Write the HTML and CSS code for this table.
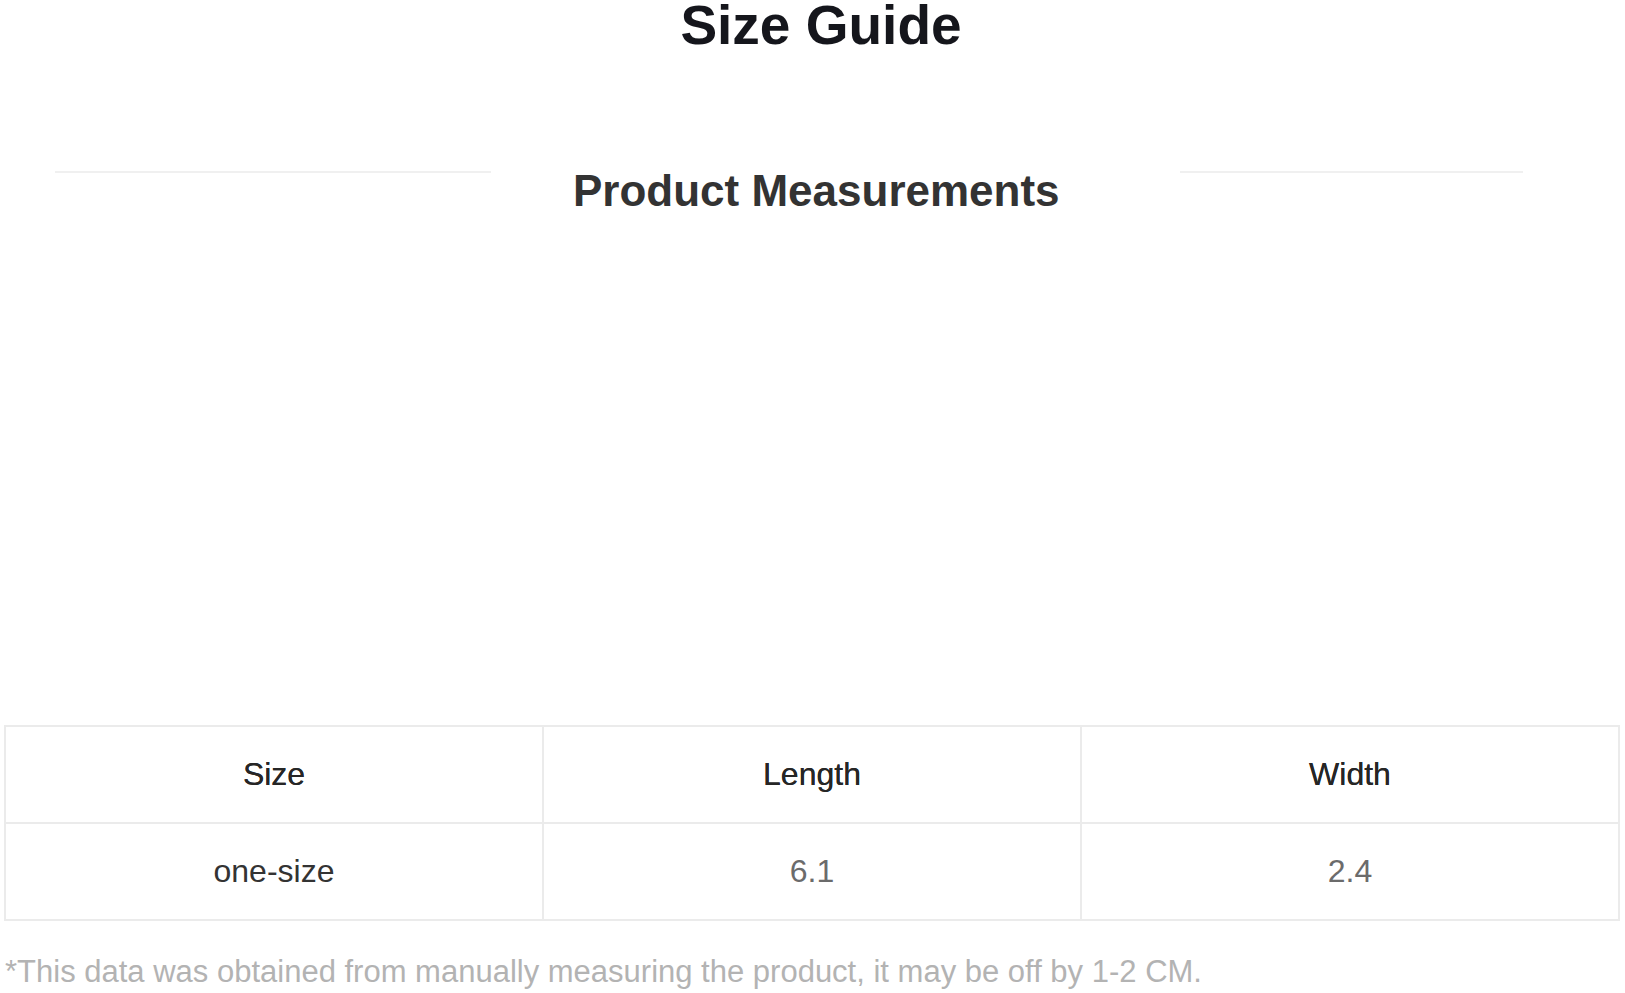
FILE: index.html
```html
<!DOCTYPE html>
<html lang="en">
<head>
    <meta charset="UTF-8">
    <meta name="viewport" content="width=device-width, initial-scale=1.0">
    <title>Size Guide</title>
    <link rel="stylesheet" href="styles.css">
</head>
<body>
    <div class="page">
        <h1 class="title">Size Guide</h1>

        <div class="section-head">
            <span class="rule rule-left"></span>
            <h2>Product Measurements</h2>
            <span class="rule rule-right"></span>
        </div>

        <table class="size-table">
            <thead>
                <tr>
                    <th>Size</th>
                    <th>Length</th>
                    <th>Width</th>
                </tr>
            </thead>
            <tbody>
                <tr>
                    <td class="size-name">one-size</td>
                    <td>6.1</td>
                    <td>2.4</td>
                </tr>
            </tbody>
        </table>

        <p class="note">*This data was obtained from manually measuring the product, it may be off by 1-2 CM.</p>
    </div>
</body>
</html>
```

FILE: styles.css
```css
body {
    font-family: "Liberation Sans", Arial, sans-serif;
    background-color: #fff;
    margin: 0;
    padding: 0;
}

.page {
    padding: 0 5px 0 4px;
}

.title {
    margin: 0 0 0 18px;
    font-size: 55px;
    line-height: 50px;
    font-weight: bold;
    color: #15161c;
    text-align: center;
}

.section-head {
    display: flex;
    align-items: flex-start;
    margin-top: 119px;
    height: 44px;
}

.section-head h2 {
    margin: 0 0 0 82px;
    font-size: 44px;
    line-height: 44px;
    font-weight: bold;
    color: #333;
    white-space: nowrap;
}

.rule {
    display: block;
    height: 2px;
    margin-top: 2px;
    background-color: #f0f0f0;
}

.rule-left {
    width: 436px;
    margin-left: 51px;
}

.rule-right {
    width: 343px;
    margin-left: 120px;
}

.size-table {
    width: 100%;
    margin-top: 512px;
    border-collapse: collapse;
    table-layout: fixed;
    border: 2px solid #ebebeb;
}

.size-table th,
.size-table td {
    border: 2px solid #ebebeb;
    height: 95px;
    padding: 0;
    text-align: center;
    font-size: 32px;
    font-weight: normal;
}

.size-table th {
    color: #262626;
    text-shadow: 0 0 0.4px #262626;
}

.size-table td {
    color: #6b6b6b;
}

.size-table td.size-name {
    color: #333;
}

.note {
    margin: 33px 0 0 1px;
    font-size: 31px;
    line-height: 36px;
    color: #b3b3b3;
    white-space: nowrap;
}
```
